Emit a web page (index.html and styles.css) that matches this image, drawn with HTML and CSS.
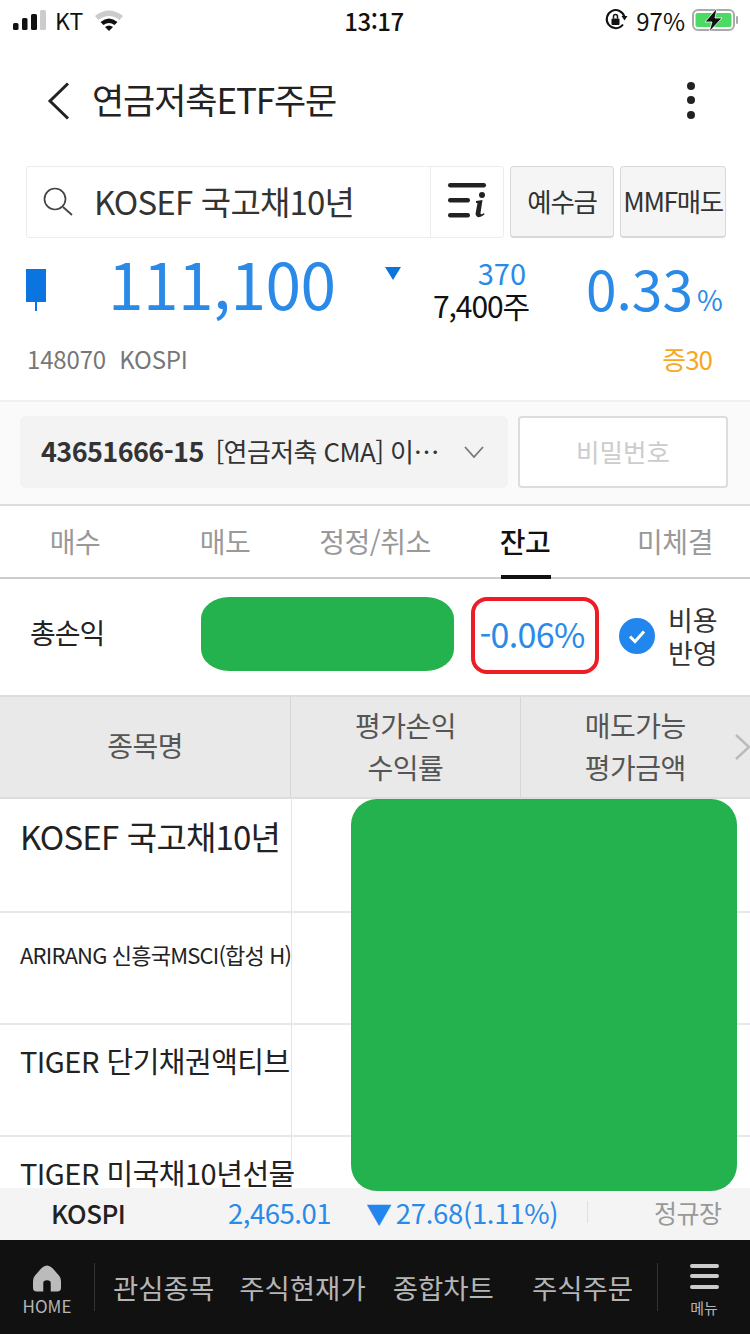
FILE: index.html
```html
<!DOCTYPE html>
<html lang="ko">

<head>
    <meta charset="UTF-8">
    <meta name="viewport" content="width=device-width, initial-scale=1.0">
    <title>연금저축ETF주문</title>
    <link rel="stylesheet" href="styles.css">
</head>

<body>
    <div class="screen">
        <!-- 상태바 -->
        <div class="status">
            <div class="status-left">
                <svg width="33" height="20" viewBox="0 0 33 20">
                    <rect x="0" y="13" width="5.500" height="7" rx="1.500" fill="#111" />
                    <rect x="9" y="8" width="5.500" height="12" rx="1.500" fill="#111" />
                    <rect x="18" y="4" width="6" height="16" rx="1.500" fill="#111" />
                    <rect x="27" y="0" width="6" height="20" rx="1.500" fill="#ccc" />
                </svg>
                <span class="carrier">KT</span>
                <svg class="wifi" width="30" height="22" viewBox="0 0 30 22">
                    <path d="M1 7 Q15 -4 29 7 L25.500 11 Q15 3 4.500 11 Z" fill="#ccc" />
                    <path d="M6.500 13 Q15 6 23.500 13 L20.500 16 Q15 12 9.500 16 Z" fill="#111" />
                    <path d="M11 18 Q15 15 19 18 L15 22 Z" fill="#111" />
                </svg>
            </div>
            <div class="status-time">13:17</div>
            <div class="status-right">
                <svg width="24" height="24" viewBox="0 0 24 24">
                    <path d="M19 16.500 A9 9 0 1 1 20.500 9" fill="none" stroke="#111" stroke-width="2" />
                    <path d="M17.500 8 L23.500 8 L20.500 12.500 Z" fill="#111" />
                    <rect x="7.500" y="10.500" width="8" height="6.500" rx="1" fill="#111" />
                    <path d="M9.500 10.500 V8.500 A2 2 0 0 1 13.500 8.500 V10.500" fill="none" stroke="#111" stroke-width="1.500" />
                </svg>
                <span class="battery-text">97%</span>
                <svg width="46" height="24" viewBox="0 0 46 24">
                    <rect x="1" y="2" width="41" height="20" rx="5" fill="none" stroke="#aaa" stroke-width="2" />
                    <rect x="3.500" y="5" width="36" height="14" rx="2" fill="#4cd964" />
                    <rect x="44" y="8" width="2" height="8" rx="1" fill="#aaa" />
                    <path d="M25 0 L13 14 H20 L17 24 L30 10 H23 Z" fill="#111" stroke="#fff" stroke-width=".8" />
                </svg>
            </div>
        </div>

        <!-- 타이틀 -->
        <div class="title-bar">
            <svg class="back" width="24" height="38" viewBox="0 0 24 38">
                <path d="M22 1.500 L4 19 L22 36.500" fill="none" stroke="#222" stroke-width="3" />
            </svg>
            <h1 class="title">연금저축ETF주문</h1>
            <div class="more"><i></i><i></i><i></i></div>
        </div>

        <!-- 종목검색 -->
        <div class="search-row">
            <div class="search-box">
                <div class="search-input">
                    <svg width="32" height="32" viewBox="0 0 32 32">
                        <circle cx="13" cy="13" r="10.500" fill="none" stroke="#444" stroke-width="1.700" />
                        <path d="M21 21 L30 29" stroke="#444" stroke-width="1.700" />
                    </svg>
                    <span class="search-name">KOSEF 국고채10년</span>
                </div>
                <div class="search-info">
                    <svg width="40" height="36" viewBox="0 0 40 36">
                        <rect x="1" y="1" width="38" height="4.500" rx="2.200" fill="#222" />
                        <rect x="1" y="16" width="22" height="4.500" rx="2.200" fill="#222" />
                        <rect x="1" y="31" width="22" height="4.500" rx="2.200" fill="#222" />
                        <circle cx="35" cy="13" r="3" fill="#222" />
                        <path d="M29 19 L35.500 18 L33.500 31 Q33.500 33.500 37 31 L37.500 32.500 Q30 38 28.500 32 L30.500 21 L29 21 Z" fill="#222" />
                    </svg>
                </div>
            </div>
            <div class="gray-btn">예수금</div>
            <div class="gray-btn mmf">MMF매도</div>
        </div>

        <!-- 현재가 -->
        <div class="quote-row">
            <svg class="candle" width="20" height="42" viewBox="0 0 20 42">
                <rect x="0" y="0" width="20" height="33" fill="#0a74e0" />
                <rect x="9" y="33" width="2" height="9" fill="#0a74e0" />
            </svg>
            <div class="price">111,100</div>
            <div class="down-mark"></div>
            <div class="change">
                <div class="change-val">370</div>
                <div class="volume">7,400주</div>
            </div>
            <div class="rate">0.33<span class="rate-unit">%</span></div>
        </div>
        <div class="meta-row">
            <span>148070&nbsp; KOSPI</span>
            <span class="margin">증30</span>
        </div>

        <!-- 계좌 -->
        <div class="account-row">
            <div class="account-select">
                <span class="account-text"><b>43651666-15</b> [연금저축 CMA] 이…</span>
                <svg width="20" height="12" viewBox="0 0 20 12">
                    <path d="M1 1 L10 11 L19 1" fill="none" stroke="#777" stroke-width="1.800" />
                </svg>
            </div>
            <div class="password">비밀번호</div>
        </div>

        <!-- 탭 -->
        <div class="tabs">
            <div class="tab">매수</div>
            <div class="tab">매도</div>
            <div class="tab">정정/취소</div>
            <div class="tab active">잔고</div>
            <div class="tab">미체결</div>
        </div>

        <!-- 총손익 -->
        <div class="summary">
            <div class="summary-label">총손익</div>
            <div class="blot-small"></div>
            <div class="profit-rate">-0.06%</div>
            <svg class="check" width="36" height="36" viewBox="0 0 36 36">
                <circle cx="18" cy="18" r="18" fill="#2186ed" />
                <path d="M11 18.500 L16 23.500 L25 13.500" fill="none" stroke="#fff" stroke-width="3" />
            </svg>
            <div class="fee-label">비용<br>반영</div>
        </div>

        <!-- 잔고 테이블 -->
        <div class="thead">
            <div class="th th-name">종목명</div>
            <div class="th th-profit">평가손익<br>수익률</div>
            <div class="th th-amount">매도가능<br>평가금액</div>
            <svg class="th-arrow" width="18" height="28" viewBox="0 0 18 28">
                <path d="M2 2 L15 14 L2 26" fill="none" stroke="#bbb" stroke-width="2.500" />
            </svg>
        </div>
        <div class="tbody">
            <div class="tr first"><div class="td-name large">KOSEF 국고채10년</div></div>
            <div class="tr"><div class="td-name small">ARIRANG 신흥국MSCI(합성 H)</div></div>
            <div class="tr"><div class="td-name big">TIGER 단기채권액티브</div></div>
            <div class="tr"><div class="td-name big">TIGER 미국채10년선물</div></div>
        </div>

        <!-- 지수 -->
        <div class="ticker">
            <div class="ticker-name">KOSPI</div>
            <div class="ticker-val">2,465.01</div>
            <div class="ticker-change"><span class="tri">▼</span>27.68(1.11%)</div>
            <div class="ticker-state">정규장</div>
        </div>

        <!-- 하단메뉴 -->
        <div class="nav">
            <div class="nav-home">
                <svg width="28" height="27" viewBox="0 0 30 28">
                    <path d="M15 0 Q18 0 21 3 L28 11 Q30 13 30 17 V24 Q30 28 26 28 H19 V19 Q19 16 15 16 Q11 16 11 19 V28 H4 Q0 28 0 24 V17 Q0 13 2 11 L9 3 Q12 0 15 0 Z" fill="#bbb" />
                </svg>
                <span>HOME</span>
            </div>
            <div class="nav-sep"></div>
            <div class="nav-links">
                <span>관심종목</span>
                <span class="nav-second">주식현재가</span>
                <span>종합차트</span>
                <span class="nav-last">주식주문</span>
            </div>
            <div class="nav-sep"></div>
            <div class="nav-menu">
                <div class="burger"><i></i><i></i><i></i></div>
                <span>메뉴</span>
            </div>
        </div>

        <!-- 가림 -->
        <div class="blot-large"></div>
    </div>
</body>

</html>
```

FILE: styles.css
```css
* {
    box-sizing: border-box;
}

body {
    margin: 0;
    background: #fff;
    font-family: "Noto Sans CJK KR", "Noto Sans", sans-serif;
    color: #222;
}

.screen {
    position: relative;
    width: 750px;
    height: 1334px;
    overflow: hidden;
    display: flex;
    flex-direction: column;
}

/* 상태바 */
.status {
    height: 40px;
    flex: none;
    display: flex;
    align-items: center;
    padding: 0 12px 0 13px;
    color: #111;
    font-size: 24px;
}

.status-left,
.status-right {
    flex: 1;
    display: flex;
    align-items: center;
}

.status-right {
    justify-content: flex-end;
}

.carrier {
    margin-left: 9px;
    font-size: 23px;
}

.wifi {
    margin-left: 11px;
}

.status-time {
    margin-right: 3px;
    font-weight: 500;
    font-size: 24px;
    letter-spacing: -.5px;
}

.battery-text {
    margin: 0 7px 0 8px;
    font-size: 24px;
}

/* 타이틀 */
.title-bar {
    height: 126px;
    flex: none;
    display: flex;
    align-items: center;
    padding: 0 46px 8px;
}

.back {
    margin-top: 3px;
}

.title {
    flex: 1;
    margin: -2px 0 0 22px;
    font-size: 35px;
    font-weight: 400;
    letter-spacing: -1.100px;
    color: #222;
}

.more {
    margin-top: 2px;
}

.more i {
    display: block;
    width: 8px;
    height: 8px;
    border-radius: 50%;
    background: #222;
    margin: 6.500px 9px;
}

/* 검색 */
.search-row {
    height: 72px;
    flex: none;
    display: flex;
    padding-left: 26px;
    gap: 6px;
}

.search-box {
    width: 478px;
    display: flex;
    border: 1px solid #ececec;
    border-radius: 3px;
}

.search-input {
    width: 404px;
    display: flex;
    align-items: center;
    padding-left: 15px;
    border-right: 1px solid #ececec;
}

.search-name {
    margin: -2px 0 0 20px;
    font-size: 33px;
    letter-spacing: -.8px;
    color: #333;
    white-space: nowrap;
}

.search-info {
    flex: 1;
    display: flex;
    align-items: center;
    justify-content: center;
    padding-bottom: 4px;
}

.gray-btn {
    width: 104px;
    display: flex;
    align-items: center;
    justify-content: center;
    padding-bottom: 3px;
    background: #f5f5f5;
    border: 1px solid #d8d8d8;
    border-bottom-width: 2px;
    border-radius: 4px;
    font-size: 26.500px;
    letter-spacing: -1.200px;
    color: #333;
}

.gray-btn.mmf {
    width: 106px;
    letter-spacing: -1.400px;
}

/* 현재가 */
.quote-row {
    height: 100px;
    flex: none;
    display: flex;
    align-items: flex-start;
    padding-left: 26px;
}

.candle {
    margin-top: 31px;
    flex: none;
}

.price {
    width: 277px;
    margin-left: 62px;
    font-size: 64px;
    line-height: 88px;
    color: #2a8ae8;
    letter-spacing: -.5px;
}

.down-mark {
    width: 0;
    height: 0;
    margin-top: 29px;
    border-left: 8.500px solid transparent;
    border-right: 8.500px solid transparent;
    border-top: 13px solid #0a74e0;
}

.change {
    width: 128px;
    text-align: right;
    padding-top: 17px;
    white-space: nowrap;
}

.change-val {
    padding-right: 3px;
    font-size: 29px;
    line-height: 34px;
    color: #2a8ae8;
}

.volume {
    font-size: 30px;
    line-height: 32px;
    color: #111;
    letter-spacing: -1.100px;
}

.rate {
    margin-left: 57px;
    font-size: 55px;
    line-height: 98px;
    color: #2a8ae8;
    white-space: nowrap;
}

.rate-unit {
    margin-left: 4px;
    font-size: 28px;
}

.meta-row {
    height: 62px;
    flex: none;
    display: flex;
    justify-content: space-between;
    padding: 0 38px 0 27px;
    font-size: 24px;
    line-height: 42px;
    letter-spacing: -.15px;
    color: #777;
}

.margin {
    color: #f7a823;
    font-size: 26px;
    letter-spacing: -1px;
}

/* 계좌 */
.account-row {
    height: 106px;
    flex: none;
    display: flex;
    gap: 10px;
    padding: 14px 22px 0 20px;
    background: #fafafa;
    border-top: 2px solid #f0f0f0;
    border-bottom: 2px solid #ddd;
}

.account-select {
    width: 488px;
    height: 72px;
    display: flex;
    align-items: center;
    justify-content: space-between;
    padding: 0 24px 0 21px;
    background: #f3f3f3;
    border-radius: 6px;
}

.account-text {
    margin-top: -3px;
    font-size: 26px;
    letter-spacing: -.6px;
    color: #333;
    white-space: nowrap;
}

.account-text b {
    font-size: 27px;
    font-weight: 700;
    margin-right: 5px;
}

.password {
    width: 210px;
    height: 72px;
    display: flex;
    align-items: center;
    justify-content: center;
    padding-bottom: 3px;
    background: #fff;
    border: 2px solid #ddd;
    border-radius: 4px;
    font-size: 25.500px;
    color: #ccc;
}

/* 탭 */
.tabs {
    height: 73px;
    flex: none;
    display: flex;
    border-bottom: 2px solid #ccc;
}

.tab {
    position: relative;
    width: 150px;
    text-align: center;
    font-size: 28px;
    line-height: 70px;
    color: #999;
    letter-spacing: -.5px;
}

.tab.active {
    color: #111;
    font-weight: 500;
}

.tab.active::after {
    content: "";
    position: absolute;
    left: 51px;
    bottom: -2px;
    width: 50px;
    height: 4px;
    background: #111;
}

/* 총손익 */
.summary {
    height: 118px;
    flex: none;
    display: flex;
    align-items: center;
    padding-left: 30px;
    border-bottom: 2px solid #ddd;
}

.summary-label {
    width: 171px;
    margin-top: -10px;
    font-size: 28px;
    letter-spacing: -1px;
}

.blot-small {
    width: 253px;
    height: 74px;
    margin-top: -6px;
    background: #24b24f;
    border-radius: 28px / 22px;
}

.profit-rate {
    width: 128px;
    height: 77px;
    margin: -3px 0 0 17px;
    padding-right: 6px;
    border: 4px solid #ee1c25;
    border-radius: 16px;
    text-align: center;
    font-size: 34px;
    line-height: 66px;
    color: #2a8ae8;
    letter-spacing: -.7px;
    white-space: nowrap;
}

.check {
    margin: -2px 0 0 20px;
}

.fee-label {
    margin: -2px 0 0 13px;
    font-size: 27px;
    line-height: 33px;
    color: #333;
}

/* 테이블 */
.thead {
    height: 102px;
    flex: none;
    position: relative;
    display: flex;
    background: #e9e9e9;
    border-bottom: 2px solid #ddd;
    font-size: 28px;
    line-height: 42px;
    color: #555;
    text-align: center;
    letter-spacing: -.5px;
}

.th {
    display: flex;
    align-items: center;
    justify-content: center;
    padding-bottom: 2px;
}

.th-name {
    width: 292px;
    padding-bottom: 4px;
    border-right: 1px solid #d6d6d6;
}

.th-profit {
    width: 230px;
    border-right: 1px solid #d6d6d6;
}

.th-amount {
    width: 230px;
}

.th-arrow {
    position: absolute;
    right: -2px;
    top: 36px;
}

.tbody {
    flex: 1;
    overflow: hidden;
}

.tr {
    height: 112px;
    border-bottom: 2px solid #e8e8e8;
}

.tr.first {
    height: 114px;
}

.td-name {
    width: 292px;
    height: 100%;
    border-right: 1px solid #e4e4e4;
    padding-left: 20px;
    color: #222;
    white-space: nowrap;
}

.td-name.large {
    font-size: 33px;
    line-height: 74px;
    letter-spacing: -.8px;
}

.td-name.big {
    font-size: 29px;
    line-height: 71px;
    letter-spacing: -.5px;
}

.td-name.small {
    font-size: 22px;
    line-height: 82px;
    letter-spacing: -.8px;
}

/* 지수 */
.ticker {
    height: 52px;
    flex: none;
    display: flex;
    align-items: center;
    padding-bottom: 4px;
    background: #f4f4f4;
    font-size: 27.500px;
    letter-spacing: -.5px;
}

.ticker-name {
    width: 228px;
    padding-left: 51px;
    font-size: 26px;
    font-weight: 500;
    color: #222;
}

.ticker-val {
    width: 138px;
    color: #2a8ae8;
}

.ticker-change {
    width: 222px;
    height: 22px;
    line-height: 22px;
    color: #2a8ae8;
    border-right: 1px solid #e0e0e0;
    white-space: nowrap;
    letter-spacing: -.3px;
}

.tri {
    margin-right: 4px;
    font-size: 26px;
    color: #2186ed;
}

.ticker-state {
    margin-left: 66px;
    color: #999;
    font-size: 25px;
}

/* 하단메뉴 */
.nav {
    height: 94px;
    flex: none;
    display: flex;
    align-items: center;
    background: #111;
    color: #b5b5b5;
}

.nav-home {
    width: 94px;
    margin-top: 8px;
    display: flex;
    flex-direction: column;
    align-items: center;
    font-size: 17px;
    line-height: 24px;
}

.nav-home svg {
    margin-bottom: 2px;
}

.nav-sep {
    width: 1px;
    height: 48px;
    background: #333;
}

.nav-links {
    width: 562px;
    display: flex;
    gap: 27px;
    padding-left: 18px;
    font-size: 27.500px;
    white-space: nowrap;
}

.nav-second {
    margin-left: -2px;
}

.nav-last {
    margin-left: 11px;
}

.nav-menu {
    flex: 1;
    margin-top: 8px;
    display: flex;
    flex-direction: column;
    align-items: center;
    font-size: 15px;
    line-height: 20px;
}

.burger {
    margin-bottom: 3px;
}

.burger i {
    display: block;
    width: 29px;
    height: 4px;
    border-radius: 2px;
    background: #ccc;
    margin: 0 0 6.500px;
}

/* 가림 */
.blot-large {
    position: absolute;
    left: 351px;
    top: 799px;
    width: 386px;
    height: 392px;
    background: #24b24f;
    border-radius: 26px;
}
```
